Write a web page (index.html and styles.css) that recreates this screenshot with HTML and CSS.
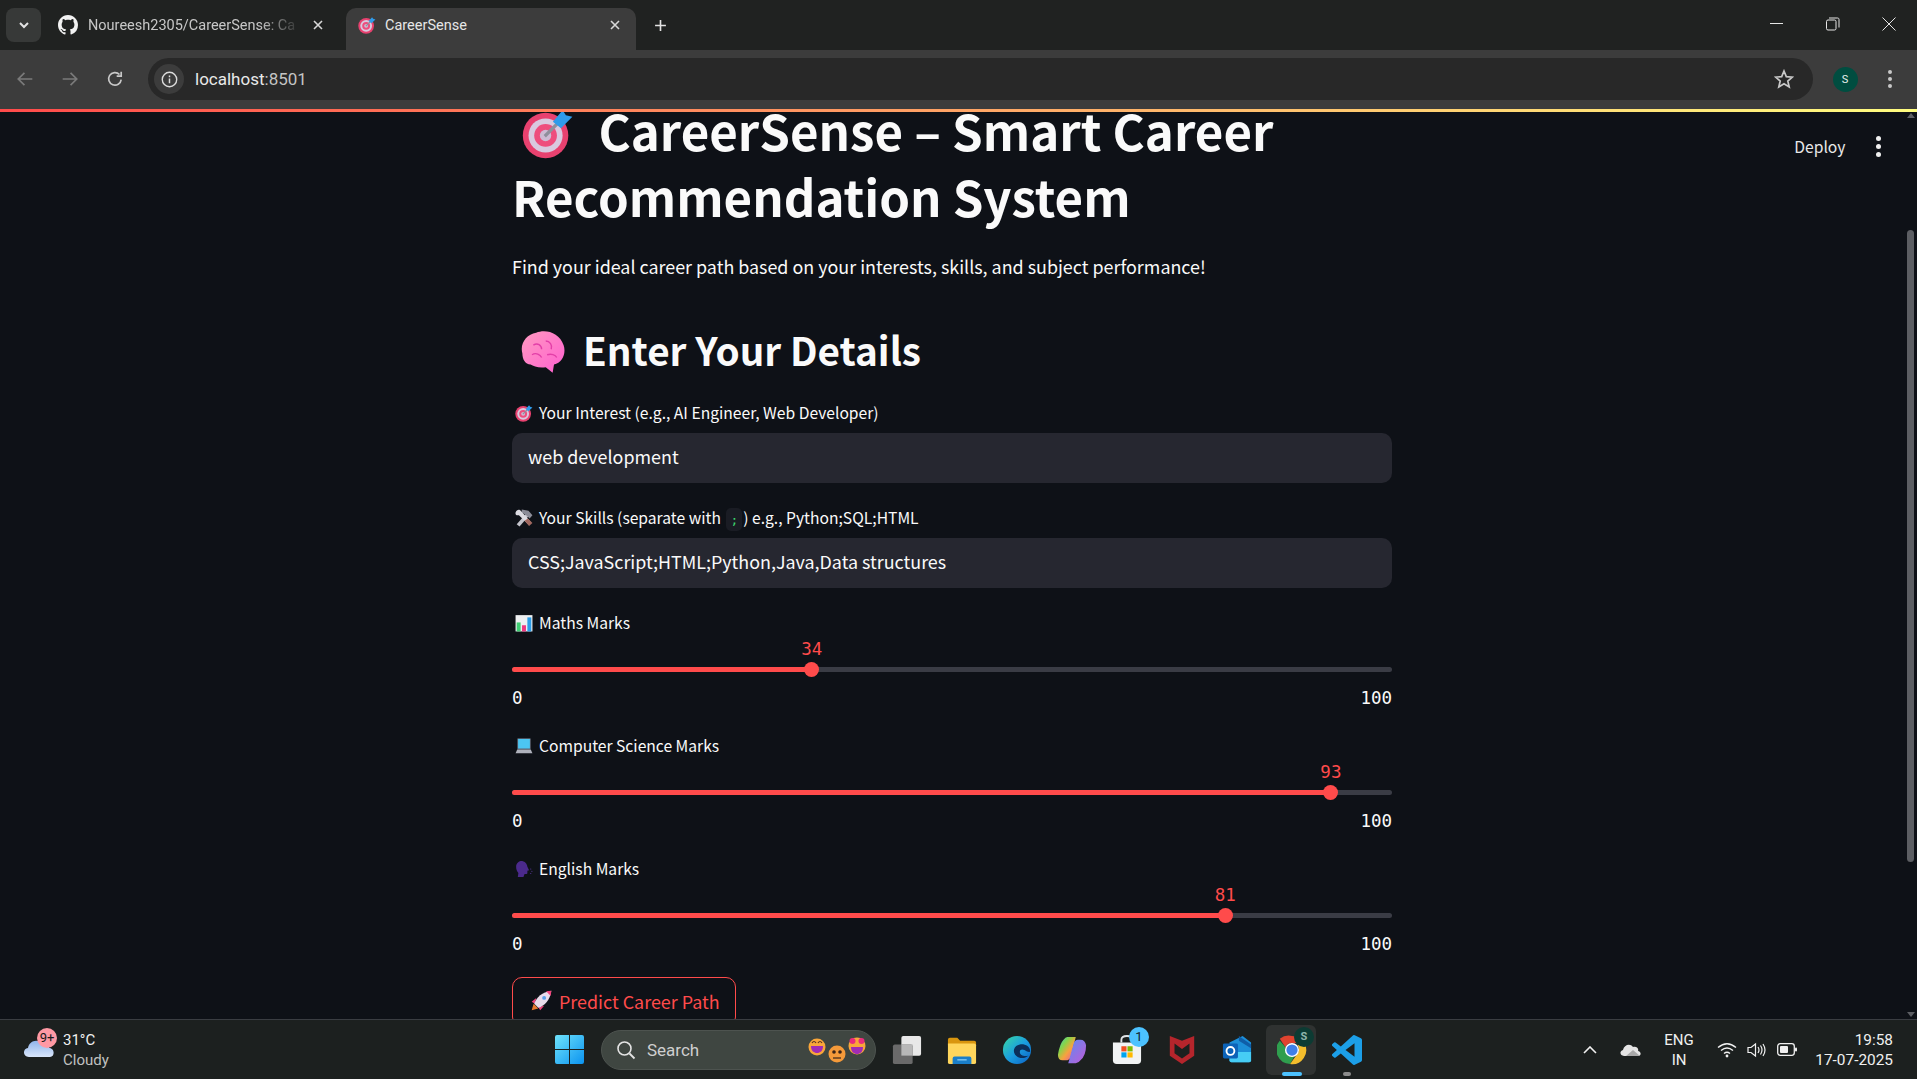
FILE: index.html
```html
<!DOCTYPE html>
<html lang="en">

<head>
    <meta charset="UTF-8">
    <meta name="viewport" content="width=device-width, initial-scale=1.0">
    <title>CareerSense</title>
    <link rel="stylesheet" href="styles.css">
</head>

<body>

    <!-- shared emoji drawings -->
    <svg class="sprite" aria-hidden="true">
        <symbol id="dart" viewBox="0 0 32 32">
            <circle cx="14.5" cy="17.5" r="14" fill="#e8416f"/>
            <circle cx="14.5" cy="17.5" r="10.5" fill="#d9c9df"/>
            <circle cx="14.5" cy="17.5" r="7" fill="#ee4d7d"/>
            <circle cx="14.5" cy="17.5" r="3.5" fill="#cdbbd3"/>
            <path d="M14 18 L24 8" stroke="#8f8f9c" stroke-width="2"/>
            <path d="M19 9 L25 2 L27 5 L31 6 L24 13 Z" fill="#2f9bea"/>
        </symbol>
        <symbol id="brain" viewBox="0 0 32 32">
            <defs>
                <linearGradient id="brainFill" x1="0" y1="0" x2="1" y2="1">
                    <stop offset="0" stop-color="#ff9ac0"/>
                    <stop offset="1" stop-color="#ff5fd0"/>
                </linearGradient>
            </defs>
            <path d="M1 17 C-1 10 4 3 11 2 C18 -1 28 2 31 11 C33 17 30 24 24 25 L23 31 L18 27 C13 28 9 26 7 25 C3 25 1 21 1 17 Z" fill="url(#brainFill)"/>
            <path d="M9 11 C12 9 15 11 15 14 M18 8 C21 8 23 11 22 14 M8 18 C11 16 14 18 15 20 M19 18 C22 17 25 18 26 20" fill="none" stroke="#e33fa8" stroke-width="1"/>
        </symbol>
        <symbol id="tools" viewBox="0 0 32 32">
            <path d="M3 27 L19 9 L24 13 L8 31 Z" fill="#c4c4cc"/>
            <path d="M12 1 L24 3 L31 11 L26 17 L20 11 L12 6 Z" fill="#8b8d98"/>
            <path d="M1 6 C3 0 9 0 11 4 L29 24 L25 29 L7 11 C3 12 0 10 1 6 Z" fill="#dcdce2"/>
            <path d="M17 21 L25 30 L31 25 L23 17 Z" fill="#a1685f"/>
        </symbol>
        <symbol id="chart" viewBox="0 0 32 32">
            <rect x="1" y="2" width="30" height="29" fill="#eef0f2"/>
            <rect x="3" y="15" width="7" height="16" fill="#3fce73"/>
            <rect x="12.5" y="20" width="7" height="11" fill="#f0377f"/>
            <rect x="22" y="6" width="7" height="25" fill="#2b9de8"/>
        </symbol>
        <symbol id="laptop" viewBox="0 0 32 32">
            <rect x="4" y="2" width="24" height="20" rx="1.5" fill="#5c6270"/>
            <rect x="5.5" y="3.5" width="21" height="17" fill="#4cc6f2"/>
            <path d="M4 22 H28 L31 29 H1 Z" fill="#aeb1bb"/>
        </symbol>
        <symbol id="head" viewBox="0 0 32 32">
            <path d="M2 12 C2 4 9 1 14 2 C19 3 22 8 22 12 L25 18 L22 19 L22 23 C22 25 20 25 17 25 L15 30 H5 L6 23 C3 20 2 16 2 12 Z" fill="#4b2a8c"/>
            <circle cx="28" cy="16" r="1" fill="#5b3aa0"/>
            <circle cx="30" cy="20" r="1" fill="#5b3aa0"/>
            <circle cx="28" cy="24" r="1" fill="#5b3aa0"/>
        </symbol>
        <symbol id="rocket" viewBox="0 0 32 32">
            <path d="M1 31 L4 21 L11 28 Z" fill="#e8782c"/>
            <path d="M8 12 L1 18 L6 21 Z M20 24 L14 31 L11 26 Z" fill="#f0457c"/>
            <path d="M5 21 C8 11 17 3 31 1 C29 15 21 24 11 27 Z" fill="#e8dcea"/>
            <path d="M23 2 L31 1 L30 9 Z" fill="#f0457c"/>
            <circle cx="20" cy="12" r="3" fill="#5aa0e8"/>
        </symbol>
    </svg>

    <header class="tabstrip">
        <button class="tab-search">
            <svg width="14" height="14" viewBox="0 0 14 14"><path d="M3 5 L7 9 L11 5" fill="none" stroke="#e3e3e3" stroke-width="2"/></svg>
        </button>
        <div class="tab tab-back">
            <svg class="favicon favicon-github" viewBox="0 0 16 16"><path fill="#f2f2f2" d="M8 0C3.58 0 0 3.58 0 8c0 3.54 2.29 6.53 5.47 7.59.4.07.55-.17.55-.38 0-.19-.01-.82-.01-1.49-2.01.37-2.53-.49-2.69-.94-.09-.23-.48-.94-.82-1.13-.28-.15-.68-.52-.01-.53.63-.01 1.08.58 1.23.82.72 1.21 1.87.87 2.33.66.07-.52.28-.87.51-1.07-1.78-.2-3.64-.89-3.64-3.95 0-.87.31-1.59.82-2.15-.08-.2-.36-1.02.08-2.12 0 0 .67-.21 2.2.82.64-.18 1.32-.27 2-.27.68 0 1.36.09 2 .27 1.53-1.04 2.2-.82 2.2-.82.44 1.1.16 1.92.08 2.12.51.56.82 1.27.82 2.15 0 3.07-1.87 3.75-3.65 3.95.29.25.54.73.54 1.48 0 1.07-.01 1.93-.01 2.2 0 .21.15.46.55.38A8.013 8.013 0 0016 8c0-4.42-3.58-8-8-8z"/></svg>
            <span class="tab-title tab-fade">Noureesh2305/CareerSense: Ca</span>
            <svg class="tab-close" viewBox="0 0 12 12"><path d="M2 2 L10 10 M10 2 L2 10" stroke="#d8d8d8" stroke-width="1.6"/></svg>
        </div>
        <div class="tab tab-active">
            <svg class="favicon" viewBox="0 0 32 32"><use href="#dart"/></svg>
            <span class="tab-title">CareerSense</span>
            <svg class="tab-close" viewBox="0 0 12 12"><path d="M2 2 L10 10 M10 2 L2 10" stroke="#d8d8d8" stroke-width="1.6"/></svg>
        </div>
        <svg class="new-tab" viewBox="0 0 12 12"><path d="M6 1 V11 M1 6 H11" stroke="#e3e3e3" stroke-width="1.5"/></svg>
        <div class="window-buttons">
            <svg viewBox="0 0 14 14"><path d="M0 6.5 H13" stroke="#e6e6e6" stroke-width="1"/></svg>
            <svg viewBox="0 0 14 14"><rect x="0.5" y="3" width="9.5" height="10" rx="1.5" fill="none" stroke="#e6e6e6"/><path d="M3 1 H11.5 C12.5 1 13 1.5 13 2.5 V10.5" fill="none" stroke="#e6e6e6"/></svg>
            <svg viewBox="0 0 14 14"><path d="M0.5 0.5 L13.5 13.5 M13.5 0.5 L0.5 13.5" stroke="#e6e6e6" stroke-width="1"/></svg>
        </div>
    </header>

    <nav class="toolbar">
        <svg class="nav-icon" viewBox="0 0 16 16"><path d="M14.5 8 H2.5 M7.5 2.5 L2 8 L7.5 13.5" fill="none" stroke="#7a7a7a" stroke-width="1.5"/></svg>
        <svg class="nav-icon" viewBox="0 0 16 16"><path d="M1.5 8 H13.5 M8.5 2.5 L14 8 L8.5 13.5" fill="none" stroke="#7a7a7a" stroke-width="1.5"/></svg>
        <svg class="nav-icon" viewBox="0 0 16 16"><path d="M13.5 8.5 A5.6 5.6 0 1 1 12 4 M13.5 1.5 V5.5 H9.5" fill="none" stroke="#c8c8c8" stroke-width="1.5"/></svg>
        <div class="omnibox">
            <span class="site-info">
                <svg width="17" height="17" viewBox="0 0 16 16"><circle cx="8" cy="8" r="6.8" fill="none" stroke="#dcdcdc" stroke-width="1.3"/><path d="M8 7 V11.5 M8 4.2 V5.8" stroke="#dcdcdc" stroke-width="1.4"/></svg>
            </span>
            <span class="url">localhost<span class="url-port">:8501</span></span>
            <svg class="star" viewBox="0 0 20 20"><path d="M10 2 L12.3 7.6 L18.4 8.1 L13.8 12 L15.2 18 L10 14.8 L4.8 18 L6.2 12 L1.6 8.1 L7.7 7.6 Z" fill="none" stroke="#c8c8c8" stroke-width="1.7"/></svg>
        </div>
        <span class="avatar">S</span>
        <span class="kebab"><i></i><i></i><i></i></span>
    </nav>

    <div class="decoration"></div>

    <div class="viewport">
        <main class="page">
            <div class="stapp-header">
                <span>Deploy</span>
                <span class="kebab kebab-white"><i></i><i></i><i></i></span>
            </div>

            <section class="block">
                <h1><svg class="emoji-h1"><use href="#dart"/></svg>CareerSense – Smart Career Recommendation System</h1>
                <p class="intro">Find your ideal career path based on your interests, skills, and subject performance!</p>
                <h2><svg class="emoji-h2"><use href="#brain"/></svg>Enter Your Details</h2>

                <label class="field-label"><svg class="emoji"><use href="#dart"/></svg>Your Interest (e.g., AI Engineer, Web Developer)</label>
                <div class="text-input">web development</div>

                <label class="field-label"><svg class="emoji"><use href="#tools"/></svg>Your Skills (separate with <code>;</code>) e.g., Python;SQL;HTML</label>
                <div class="text-input">CSS;JavaScript;HTML;Python,Java,Data structures</div>

                <label class="field-label"><svg class="emoji"><use href="#chart"/></svg>Maths Marks</label>
                <div class="slider">
                    <div class="track"><div class="fill" style="width: 34%"><span class="thumb"><span class="thumb-value">34</span></span></div></div>
                    <div class="ticks"><span>0</span><span>100</span></div>
                </div>

                <label class="field-label label-after-slider"><svg class="emoji"><use href="#laptop"/></svg>Computer Science Marks</label>
                <div class="slider">
                    <div class="track"><div class="fill" style="width: 93%"><span class="thumb"><span class="thumb-value">93</span></span></div></div>
                    <div class="ticks"><span>0</span><span>100</span></div>
                </div>

                <label class="field-label label-after-slider"><svg class="emoji"><use href="#head"/></svg>English Marks</label>
                <div class="slider">
                    <div class="track"><div class="fill" style="width: 81%"><span class="thumb"><span class="thumb-value">81</span></span></div></div>
                    <div class="ticks"><span>0</span><span>100</span></div>
                </div>

                <button class="predict"><svg class="emoji-btn"><use href="#rocket"/></svg>Predict Career Path</button>
            </section>
        </main>

        <div class="scrollbar">
            <span class="arrow-up"></span>
            <span class="scroll-thumb"></span>
            <span class="arrow-down"></span>
        </div>
    </div>

    <footer class="taskbar">
        <div class="weather">
            <span class="weather-icon">
                <svg width="32" height="22" viewBox="0 0 32 22"><defs><linearGradient id="cloud" x1="0" y1="0" x2="0" y2="1"><stop offset="0" stop-color="#8fb4ea"/><stop offset="1" stop-color="#d9e6fa"/></linearGradient></defs><path d="M6 21 C0 21 -1 13 5 12 C6 5 15 2 19 8 C23 6 27 9 26 12 C32 12 32 21 27 21 Z" fill="url(#cloud)"/></svg>
                <span class="weather-badge">9+</span>
            </span>
            <div class="weather-text">
                <span>31°C</span>
                <span class="weather-sub">Cloudy</span>
            </div>
        </div>

        <svg class="start" viewBox="0 0 29 29">
            <defs><linearGradient id="win" x1="0" y1="0" x2="1" y2="1"><stop offset="0" stop-color="#6fe3fb"/><stop offset="1" stop-color="#0b93f0"/></linearGradient></defs>
            <path d="M2 0 H14 V14 H0 V2 Q0 0 2 0 Z M15 0 H27 Q29 0 29 2 V14 H15 Z M0 15 H14 V29 H2 Q0 29 0 27 Z M15 15 H29 V27 Q29 29 27 29 H15 Z" fill="url(#win)"/>
        </svg>

        <div class="search-box">
            <svg width="20" height="20" viewBox="0 0 20 20"><circle cx="8.5" cy="8.5" r="6.5" fill="none" stroke="#e4e4e4" stroke-width="1.6"/><path d="M13.5 13.5 L18.5 18.5" stroke="#e4e4e4" stroke-width="1.8"/></svg>
            <span class="search-text">Search</span>
            <svg class="search-emoji" width="60" height="28" viewBox="0 0 60 28">
                <circle cx="9" cy="11" r="8.5" fill="#f9a63a"/><path d="M3 10 H15 C15 15 12 17 9 17 C6 17 3 15 3 10 Z" fill="#a02bb5"/><path d="M4 7 Q6 4 8 7 M10 7 Q12 4 14 7" fill="none" stroke="#5a3020" stroke-width="1.2"/>
                <circle cx="29" cy="18" r="8.5" fill="#f59a3a"/><circle cx="26" cy="16" r="1.8" fill="#3a2418"/><circle cx="32" cy="16" r="1.8" fill="#3a2418"/><path d="M25 22 H33" stroke="#3a2418" stroke-width="1.2"/>
                <circle cx="49" cy="10" r="8.5" fill="#f9a63a"/><path d="M43 11 H55 C55 16 52 18 49 18 C46 18 43 16 43 11 Z" fill="#a02bb5"/><circle cx="44.5" cy="5" r="3" fill="#ea2b7c"/><circle cx="53.5" cy="5" r="3" fill="#ea2b7c"/>
            </svg>
        </div>

        <div class="task-icons">
            <span class="task-icon">
                <svg viewBox="0 0 32 32"><rect x="10" y="1" width="21" height="21" rx="2" fill="#e8e8e8"/><rect x="1" y="10" width="21" height="21" rx="2" fill="#6a6a6a"/><rect x="10" y="10" width="12" height="12" fill="#b8b8b8"/></svg>
            </span>
            <span class="task-icon">
                <svg viewBox="0 0 32 32"><path d="M1 5 Q1 3 3 3 H11 L14 6 H29 Q31 6 31 8 V11 H1 Z" fill="#d9960f"/><path d="M1 9 H29 Q31 9 31 11 V29 Q31 31 29 31 H3 Q1 31 1 29 Z" fill="#ffd65c"/><path d="M6 25 Q6 23 8 23 H24 Q26 23 26 25 V31 H6 Z" fill="#1a7ec8"/><path d="M11 26.5 H21" stroke="#8fd0f5" stroke-width="1.3"/></svg>
            </span>
            <span class="task-icon">
                <svg viewBox="0 0 32 32"><defs><linearGradient id="edge" x1="0" y1="0" x2="1" y2="1"><stop offset="0" stop-color="#39d9a0"/><stop offset="0.5" stop-color="#1b9fe0"/><stop offset="1" stop-color="#0b5fc4"/></linearGradient></defs><circle cx="16" cy="16" r="15" fill="url(#edge)"/><path d="M30 17 C30 12 24 9 19 10 C13 11 11 17 14 21 C17 25 24 26 28 22 C24 23 19 22 19 18 C19 15 22 15 24 16 C27 18 30 19 30 17 Z" fill="#0c2f5a"/></svg>
            </span>
            <span class="task-icon">
                <svg viewBox="0 0 32 32"><defs><linearGradient id="copilot" x1="0" y1="0" x2="1" y2="1"><stop offset="0" stop-color="#33d2c5"/><stop offset="0.35" stop-color="#8bd347"/><stop offset="0.6" stop-color="#f8a23e"/><stop offset="1" stop-color="#e34fb0"/></linearGradient><linearGradient id="copilot2" x1="0" y1="0" x2="1" y2="1"><stop offset="0" stop-color="#5b8cf0"/><stop offset="1" stop-color="#c25ad8"/></linearGradient></defs><path d="M11 2 H20 L15 22 Q14 27 9 27 H6 Q1 27 1 21 Q3 9 7 5 Q9 2 11 2 Z" fill="url(#copilot)"/><path d="M22 5 H25 Q30 5 31 11 Q31 22 25 27 Q23 30 20 30 H12 L17 12 Q18 5 22 5 Z" fill="url(#copilot2)"/></svg>
            </span>
            <span class="task-icon">
                <svg viewBox="0 0 32 32"><path d="M10 8 V5 Q10 1 16 1 Q22 1 22 5 V8" fill="none" stroke="#dfe3e6" stroke-width="2"/><path d="M1 8 H31 V27 Q31 31 27 31 H5 Q1 31 1 27 Z" fill="#f1f3f4"/><rect x="10" y="12" width="5.5" height="5.5" fill="#f25022"/><rect x="16.5" y="12" width="5.5" height="5.5" fill="#7fba00"/><rect x="10" y="18.5" width="5.5" height="5.5" fill="#00a4ef"/><rect x="16.5" y="18.5" width="5.5" height="5.5" fill="#ffb900"/></svg>
                <span class="store-badge">1</span>
            </span>
            <span class="task-icon">
                <svg viewBox="0 0 32 32"><path d="M3 1 L16 6 L29 1 V22 L16 31 L3 22 Z M8 9 V19.5 L16 25 L24 19.5 V9 L16 15 Z" fill="#b5252c" fill-rule="evenodd"/></svg>
            </span>
            <span class="task-icon">
                <svg viewBox="0 0 32 32"><path d="M8 8 L22 1 L31 8 V27 Q31 29 29 29 H10 Q8 29 8 27 Z" fill="#1c8fd8"/><path d="M18 1 L31 10 V14 L18 6 Z" fill="#0f5ea8"/><path d="M8 18 H31 V27 Q31 29 29 29 H10 Q8 29 8 27 Z" fill="#46cdf5"/><rect x="1" y="9" width="16" height="16" rx="1.5" fill="#0c63b8"/><circle cx="9" cy="17" r="4.2" fill="none" stroke="#fff" stroke-width="2"/></svg>
            </span>
            <span class="task-icon task-active">
                <svg viewBox="0 0 32 32"><path d="M16 1 A15 15 0 0 1 29 8.5 H16 A7.5 7.5 0 0 0 9 13 L3 4 A15 15 0 0 1 16 1 Z" fill="#e0432f"/><path d="M3 6 A15 15 0 0 0 14 30.9 L20 20 A7.5 7.5 0 0 1 9 13 Z" fill="#2f9e4e"/><path d="M29 8.5 A15 15 0 0 1 14 31 L21 21 A7.5 7.5 0 0 0 22 11 Z" fill="#f3bd2c"/><circle cx="16" cy="16" r="7.5" fill="#fff"/><circle cx="16" cy="16" r="6" fill="#3f7fe8"/></svg>
                <span class="chrome-badge">S</span>
                <span class="running running-blue"></span>
            </span>
            <span class="task-icon">
                <svg viewBox="0 0 24 24"><path fill="#1c9fe8" d="M23.15 2.587L18.21.21a1.494 1.494 0 0 0-1.705.29l-9.46 8.63-4.12-3.128a.999.999 0 0 0-1.276.057L.327 7.261A1 1 0 0 0 .326 8.74L3.899 12 .326 15.26a1 1 0 0 0 .001 1.479L1.65 17.94a.999.999 0 0 0 1.276.057l4.12-3.128 9.46 8.63a1.492 1.492 0 0 0 1.704.29l4.942-2.377A1.5 1.5 0 0 0 24 20.06V3.939a1.5 1.5 0 0 0-.85-1.352zm-5.146 14.861L10.826 12l7.178-5.448v10.896z"/></svg>
                <span class="running"></span>
            </span>
        </div>

        <div class="tray">
            <svg width="14" height="8" viewBox="0 0 14 8"><path d="M1 7 L7 1 L13 7" fill="none" stroke="#f0f0f0" stroke-width="1.6"/></svg>
            <svg class="tray-cloud" width="21" height="13" viewBox="0 0 21 13"><path d="M4 13 C0 13 -1 8 3 7 C4 2 10 0 13 4 C17 3 19 6 18 8 C21 8 22 13 18 13 Z" fill="#e4e4e4"/><path d="M6 13 L13 7 L20 13 Z" fill="#a8a8a8"/></svg>
            <div class="lang"><span>ENG</span><span>IN</span></div>
            <svg class="tray-wifi" width="20" height="16" viewBox="0 0 20 16"><path d="M1 5.5 Q10 -2 19 5.5 M4 8.5 Q10 3.5 16 8.5 M7 11.5 Q10 9 13 11.5" fill="none" stroke="#f0f0f0" stroke-width="1.4"/><circle cx="10" cy="14" r="1.4" fill="#f0f0f0"/></svg>
            <svg class="tray-vol" width="20" height="16" viewBox="0 0 20 16"><path d="M1 5.5 H4 L8.5 2 V14 L4 10.5 H1 Z" fill="none" stroke="#f0f0f0" stroke-width="1.2"/><path d="M11 5 Q13 8 11 11 M13.5 3.5 Q16.5 8 13.5 12.5 M16 2 Q20 8 16 14" fill="none" stroke="#f0f0f0" stroke-width="1.2"/></svg>
            <svg class="tray-bat" width="20" height="13" viewBox="0 0 20 13"><rect x="0.7" y="0.7" width="16.6" height="11.6" rx="2.5" fill="none" stroke="#f0f0f0" stroke-width="1.3"/><rect x="3" y="3" width="8" height="7" rx="1" fill="#f0f0f0"/><rect x="18" y="4.5" width="2" height="4" rx="1" fill="#f0f0f0"/></svg>
            <div class="clock"><span>19:58</span><span>17-07-2025</span></div>
        </div>
    </footer>

</body>

</html>
```

FILE: styles.css
```css
* {
    box-sizing: border-box;
}

html,
body {
    height: 100%;
}

body {
    margin: 0;
    display: flex;
    flex-direction: column;
    overflow: hidden;
    background-color: #0e1117;
    color: #fafafa;
    font-family: Roboto, "Liberation Sans", sans-serif;
}

.sprite {
    width: 0;
    height: 0;
    flex: none;
}

/* browser frame */
.tabstrip {
    height: 50px;
    flex: none;
    display: flex;
    align-items: flex-end;
    padding-left: 6px;
    background-color: #202221;
}

.tab-search {
    width: 35px;
    height: 34px;
    margin-bottom: 8px;
    border: none;
    border-radius: 8px;
    background-color: #373938;
    display: flex;
    align-items: center;
    justify-content: center;
    padding: 0;
}

.tab {
    height: 42px;
    flex: none;
    display: flex;
    align-items: center;
    font-size: 14.5px;
    border-radius: 10px 10px 0 0;
}

.tab-back {
    width: 305px;
    padding: 0 22px 8px 17px;
    color: #c7c7c7;
}

.tab-active {
    width: 290px;
    padding: 0 15px 8px 12px;
    background-color: #3c3c3c;
    color: #e6e6e6;
}

.favicon {
    width: 18px;
    height: 18px;
    flex: none;
}

.favicon-github {
    width: 20px;
    height: 20px;
}

.tab-title {
    flex: 1;
    margin-left: 10px;
    white-space: nowrap;
    overflow: hidden;
}

.tab-active .tab-title {
    margin-left: 9px;
}

.tab-fade {
    mask-image: linear-gradient(90deg, #000 80%, transparent 100%);
}

.tab-close {
    width: 12px;
    height: 12px;
    flex: none;
    margin-left: 10px;
}

.new-tab {
    width: 13px;
    height: 13px;
    margin: 0 0 18px 18px;
}

.window-buttons {
    margin-left: auto;
    align-self: flex-start;
    display: flex;
    gap: 42px;
    padding: 17px 21px 0 0;
}

.window-buttons svg {
    width: 14px;
    height: 14px;
}

.toolbar {
    height: 59px;
    flex: none;
    display: flex;
    align-items: center;
    padding: 0 0 1px 16px;
    background-color: #3c3c3c;
}

.nav-icon {
    width: 18px;
    height: 18px;
    flex: none;
    margin-right: 27px;
}

.omnibox {
    width: 1665px;
    height: 42px;
    margin-left: -3px;
    flex: none;
    display: flex;
    align-items: center;
    padding: 0 19px 0 6px;
    border-radius: 21px;
    background-color: #282828;
}

.site-info {
    width: 30px;
    height: 30px;
    border-radius: 50%;
    background-color: #3c3c3c;
    display: flex;
    align-items: center;
    justify-content: center;
}

.url {
    margin-left: 11px;
    font-size: 17px;
    color: #e8e8e8;
}

.url-port {
    color: #c4c4c4;
}

.star {
    width: 20px;
    height: 20px;
    margin-left: auto;
}

.avatar {
    width: 25px;
    height: 25px;
    margin-left: 19.5px;
    flex: none;
    border-radius: 50%;
    background-color: #004d40;
    color: #e8f0ee;
    font-size: 11px;
    display: flex;
    align-items: center;
    justify-content: center;
}

.kebab {
    display: flex;
    flex-direction: column;
    gap: 3px;
    margin-left: 30.5px;
}

.kebab i {
    width: 4px;
    height: 4px;
    border-radius: 50%;
    background-color: #c8c8c8;
}

.kebab-white i {
    width: 5px;
    height: 5px;
    background-color: #f0f0f0;
}

.decoration {
    height: 3px;
    flex: none;
    background-image: linear-gradient(90deg, #ff4b4b, #fffd80);
}

/* streamlit page */
.viewport {
    flex: 1;
    min-height: 0;
    display: flex;
    overflow: hidden;
}

.page {
    flex: 1;
    position: relative;
    font-family: "Noto Sans CJK SC", "Noto Sans", sans-serif;
}

.stapp-header {
    position: absolute;
    top: 23px;
    right: 23.5px;
    display: flex;
    align-items: center;
    font-size: 15.7px;
    color: #e8e8e8;
}

.stapp-header .kebab {
    margin-left: 30px;
}

.block {
    width: 880px;
    margin: -15px auto 0;
}

h1 {
    margin: 0;
    font-size: 49.2px;
    line-height: 66px;
    font-weight: 700;
}

.emoji-h1 {
    width: 52px;
    height: 52px;
    margin: 0 25px 0 9.5px;
    vertical-align: -8px;
}

.intro {
    margin: 21px 0 0;
    font-size: 17.9px;
    line-height: 32px;
}

h2 {
    margin: 40px 0 0;
    font-size: 38.7px;
    line-height: 54px;
    font-weight: 700;
}

.emoji-h2 {
    width: 44px;
    height: 44px;
    margin: 0 18px 0 9px;
    vertical-align: -8px;
}

.field-label {
    display: block;
    height: 26px;
    margin-top: 22px;
    font-size: 15.65px;
    line-height: 26px;
    white-space: nowrap;
}

h2 + .field-label {
    margin-top: 24px;
}

.label-after-slider {
    margin-top: 25px;
}

.emoji {
    width: 18px;
    height: 18px;
    margin: 0 6px 0 3px;
    vertical-align: -3px;
}

code {
    margin: 0 1px 0 2px;
    padding: 4px;
    border-radius: 5px;
    background-color: #1a1c24;
    color: #3dd56d;
    font-family: "DejaVu Sans Mono", monospace;
    font-size: 13px;
}

.text-input {
    height: 50px;
    margin-top: 7px;
    padding: 0 16px;
    border-radius: 10px;
    background-color: #262730;
    font-size: 17.9px;
    line-height: 46px;
}

.slider {
    padding-top: 31px;
    font-family: "DejaVu Sans Mono", monospace;
}

.track {
    height: 5px;
    border-radius: 3px;
    background-color: #3a3c45;
}

.fill {
    height: 5px;
    border-radius: 3px;
    background-color: #ff4b4b;
    position: relative;
}

.thumb {
    position: absolute;
    right: -8px;
    top: -5px;
    width: 15px;
    height: 15px;
    border-radius: 50%;
    background-color: #ff4b4b;
}

.thumb-value {
    position: absolute;
    left: 50%;
    bottom: 18px;
    transform: translateX(-50%);
    color: #ff4b4b;
    font-size: 17.5px;
    line-height: 20px;
}

.ticks {
    display: flex;
    justify-content: space-between;
    margin-top: 16px;
    font-size: 17.5px;
    line-height: 20px;
}

.predict {
    display: flex;
    align-items: center;
    width: 224px;
    height: 50px;
    margin-top: 23px;
    padding: 0 0 3px 18px;
    border: 1px solid #ff4b4b;
    border-radius: 10px;
    background: transparent;
    color: #ff4b4b;
    font-family: inherit;
    font-size: 17.9px;
    white-space: nowrap;
}

.emoji-btn {
    width: 21px;
    height: 21px;
    margin-right: 7px;
}

.scrollbar {
    width: 13px;
    flex: none;
    display: flex;
    flex-direction: column;
    align-items: center;
    padding-top: 1px;
}

.arrow-up,
.arrow-down {
    width: 0;
    height: 0;
    border-left: 4px solid transparent;
    border-right: 4px solid transparent;
}

.arrow-up {
    border-bottom: 5px solid #5c5e63;
}

.arrow-down {
    margin-top: auto;
    margin-bottom: 2px;
    border-top: 5px solid #5c5e63;
}

.scroll-thumb {
    width: 7px;
    height: 632px;
    margin-top: 112px;
    border-radius: 4px;
    background-color: #5c5e63;
}

/* windows taskbar */
.taskbar {
    height: 60px;
    flex: none;
    display: flex;
    align-items: center;
    background-color: #1c201f;
    border-top: 1px solid #3a3d42;
    font-size: 15px;
}

.weather {
    width: 555px;
    flex: none;
    display: flex;
    align-items: center;
    padding-left: 23px;
}

.weather-icon {
    position: relative;
    width: 40px;
    height: 22px;
    margin-top: -6px;
}

.weather-badge {
    position: absolute;
    left: 14px;
    top: -8px;
    width: 20px;
    height: 20px;
    border-radius: 50%;
    background-color: #ff99a4;
    color: #1a1a1a;
    font-size: 13px;
    line-height: 20px;
    text-align: center;
}

.weather-text {
    display: flex;
    flex-direction: column;
    line-height: 20px;
    color: #f0f0f0;
}

.weather-sub {
    color: #c0c0c0;
}

.start {
    width: 29px;
    height: 29px;
    flex: none;
}

.search-box {
    width: 275px;
    height: 40px;
    margin-left: 17px;
    padding-left: 14px;
    flex: none;
    display: flex;
    align-items: center;
    border-radius: 20px;
    background-color: #3f4641;
    border: 1px solid #4d534f;
}

.search-text {
    margin-left: 11px;
    font-size: 17px;
    color: #cfcfcf;
}

.search-emoji {
    margin-left: auto;
    margin-right: 7px;
}

.task-icons {
    display: flex;
    margin-left: 3px;
    flex: none;
}

.task-icon {
    width: 55px;
    height: 50px;
    position: relative;
    display: flex;
    align-items: center;
    justify-content: center;
}

.task-icon svg {
    width: 30px;
    height: 30px;
}

.task-active::before {
    content: "";
    position: absolute;
    left: 2px;
    right: 3px;
    top: 0;
    bottom: 0;
    border-radius: 6px;
    background-color: #2f3231;
}

.task-active svg {
    position: relative;
}

.store-badge,
.chrome-badge {
    position: absolute;
    top: 2px;
    left: 30px;
    width: 20px;
    height: 20px;
    border-radius: 50%;
    background-color: #4cc2ff;
    color: #10222c;
    font-size: 13px;
    line-height: 20px;
    text-align: center;
}

.chrome-badge {
    background-color: #0c3b33;
    color: #8fb5ac;
    font-size: 11px;
    font-weight: 700;
}

.running {
    position: absolute;
    bottom: -1px;
    left: 50%;
    width: 8px;
    height: 4px;
    margin-left: -4px;
    border-radius: 2px;
    background-color: #8c8c8c;
}

.running-blue {
    width: 20px;
    margin-left: -10px;
    background-color: #4cc2ff;
}

.tray {
    margin-left: auto;
    display: flex;
    align-items: center;
    padding-right: 24px;
    color: #f0f0f0;
}

.tray-cloud {
    margin-left: 23px;
}

.lang {
    display: flex;
    flex-direction: column;
    align-items: center;
    margin-left: 23px;
    line-height: 20px;
}

.tray-wifi {
    margin-left: 23px;
}

.tray-vol {
    margin-left: 10px;
}

.tray-bat {
    margin-left: 10px;
}

.clock {
    display: flex;
    flex-direction: column;
    align-items: flex-end;
    margin-left: 18.5px;
    line-height: 20px;
    font-size: 15.4px;
}
```
